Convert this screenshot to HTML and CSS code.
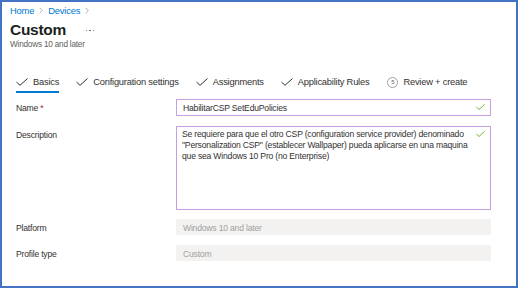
FILE: index.html
```html
<!DOCTYPE html>
<html lang="es">
<head>
  <meta charset="UTF-8" />
  <title>Custom - Devices</title>
  <link rel="stylesheet" href="styles.css">
</head>
<body>
  <section class="frame">
    <header class="head">
      <nav class="crumbs">
        <a href="#">Home</a>
        <svg class="chev" viewBox="0 0 6 10"><path d="M1 1 L5 5 L1 9" /></svg>
        <a href="#">Devices</a>
        <svg class="chev" viewBox="0 0 6 10"><path d="M1 1 L5 5 L1 9" /></svg>
      </nav>
      <div class="title-row">
        <h1>Custom</h1>
        <span class="more"><i></i><i></i><i></i></span>
      </div>
      <div class="subtitle">Windows 10 and later</div>
    </header>

    <ul class="tabs">
      <li class="tab active">
        <svg class="tick" viewBox="0 0 12 8"><path d="M0.5 4 L4 7.3 L11.5 0.5" /></svg>
        <span>Basics</span>
      </li>
      <li class="tab">
        <svg class="tick" viewBox="0 0 12 8"><path d="M0.5 4 L4 7.3 L11.5 0.5" /></svg>
        <span>Configuration settings</span>
      </li>
      <li class="tab">
        <svg class="tick" viewBox="0 0 12 8"><path d="M0.5 4 L4 7.3 L11.5 0.5" /></svg>
        <span>Assignments</span>
      </li>
      <li class="tab">
        <svg class="tick" viewBox="0 0 12 8"><path d="M0.5 4 L4 7.3 L11.5 0.5" /></svg>
        <span>Applicability Rules</span>
      </li>
      <li class="tab">
        <span class="step">5</span>
        <span>Review + create</span>
      </li>
    </ul>

    <div class="form">
      <div class="row">
        <label class="lbl">Name <span class="req">*</span></label>
        <div class="field">HabilitarCSP SetEduPolicies
          <svg class="ok" viewBox="0 0 12 8"><path d="M0.5 4 L4 7.3 L11.5 0.5" /></svg>
        </div>
      </div>
      <div class="row">
        <label class="lbl">Description</label>
        <div class="field area">Se requiere para que el otro CSP (configuration service provider) denominado "Personalization CSP" (establecer Wallpaper) pueda aplicarse en una maquina que sea Windows 10 Pro (no Enterprise)
          <svg class="ok" viewBox="0 0 12 8"><path d="M0.5 4 L4 7.3 L11.5 0.5" /></svg>
        </div>
      </div>
      <div class="row">
        <label class="lbl">Platform</label>
        <div class="field off">Windows 10 and later</div>
      </div>
      <div class="row">
        <label class="lbl">Profile type</label>
        <div class="field off">Custom</div>
      </div>
    </div>
  </section>
</body>
</html>
```

FILE: styles.css
```css
* {
  box-sizing: border-box;
}
body {
  margin: 0;
  font-family: 'Liberation Sans', Arial, sans-serif;
  color: #323130;
  background: #fff;
}
.frame {
  width: 518px;
  height: 288px;
  border: 2px solid #4472c4;
  padding: 2px 0 0 8px;
  overflow: hidden;
}
.crumbs {
  display: flex;
  align-items: center;
  gap: 5px;
  font-size: 9.4px;
  letter-spacing: -0.2px;
  height: 12px;
}
.crumbs a {
  color: #0078d4;
  text-decoration: none;
}
.chev {
  width: 4px;
  height: 7px;
  fill: none;
  stroke: #8a8886;
  stroke-width: 1;
}
.title-row {
  display: flex;
  align-items: center;
  height: 20px;
  margin-top: 4px;
}
.title-row h1 {
  margin: 0;
  font-size: 15.5px;
  font-weight: 600;
  letter-spacing: -0.3px;
  color: #201f1e;
}
.more {
  margin-left: 20px;
  display: flex;
  gap: 2px;
  padding-top: 1px;
}
.more i {
  width: 1.5px;
  height: 1.5px;
  background: #605e5c;
  border-radius: 50%;
}
.subtitle {
  font-size: 8.2px;
  letter-spacing: -0.2px;
  line-height: 10px;
  color: #605e5c;
}
.tabs {
  list-style: none;
  margin: 23px 0 0 6px;
  padding: 0;
  display: flex;
  gap: 17px;
  font-size: 9.3px;
  letter-spacing: -0.2px;
  color: #323130;
}
.tab {
  display: flex;
  align-items: center;
  gap: 5px;
  height: 20px;
  border-bottom: 2px solid transparent;
}
.tab.active {
  border-bottom-color: #0078d4;
}
.tick {
  width: 12px;
  height: 8px;
  fill: none;
  stroke: #323130;
  stroke-width: 1;
}
.step {
  width: 11px;
  height: 11px;
  border: 1px solid #a19f9d;
  border-radius: 50%;
  font-size: 6px;
  color: #605e5c;
  display: flex;
  justify-content: center;
  align-items: center;
  margin-left: 1px;
}
.form {
  margin: 6px 0 0 6px;
  font-size: 8.6px;
  letter-spacing: -0.2px;
}
.row {
  display: flex;
  align-items: flex-start;
  margin-bottom: 10px;
}
.row:nth-child(2) {
  margin-bottom: 9px;
}
.lbl {
  width: 160px;
  padding-top: 4px;
  color: #323130;
}
.req {
  color: #a4262c;
}
.field {
  position: relative;
  width: 315px;
  height: 17px;
  border: 1px solid #c89ee0;
  padding: 3px 6px;
  line-height: 10px;
  color: #323130;
}
.field.area {
  height: 84px;
  padding: 2px 20px 2px 5px;
  line-height: 11px;
}
.field.off {
  border-color: #f3f2f1;
  background: #f3f2f1;
  color: #a19f9d;
  height: 16px;
}
.ok {
  position: absolute;
  right: 5px;
  top: 4px;
  width: 9px;
  height: 6px;
  fill: none;
  stroke: #57a300;
  stroke-width: 1.1;
}
```
